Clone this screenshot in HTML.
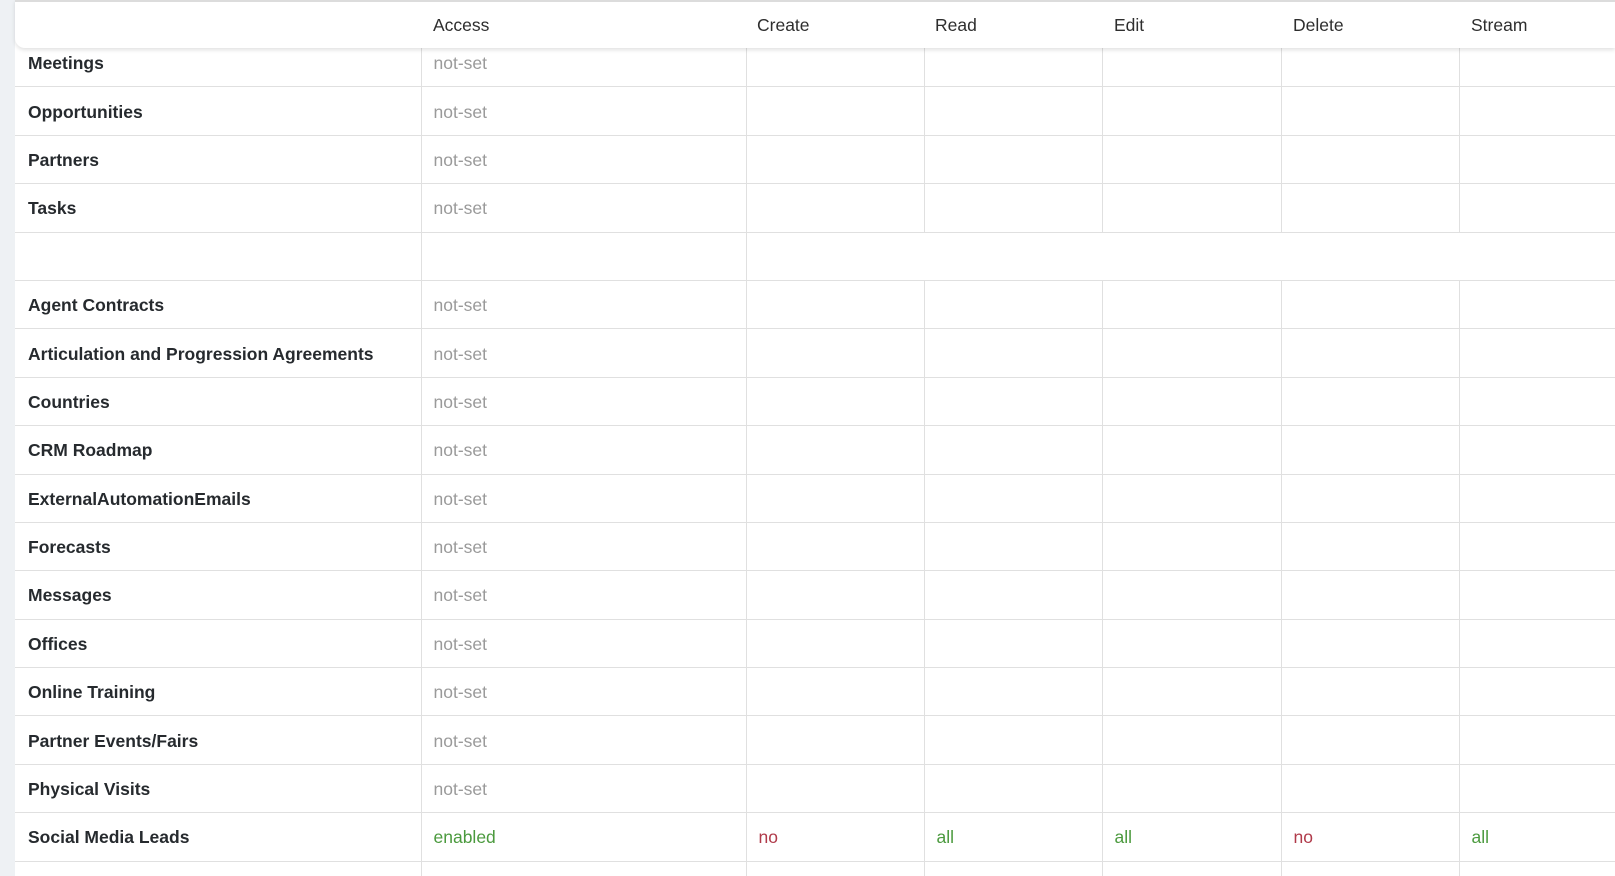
<!DOCTYPE html>
<html><head><meta charset="utf-8"><style>
html,body{margin:0;padding:0;width:1615px;height:876px;overflow:hidden;background:#fff;font-family:"Liberation Sans",sans-serif;}
.wrap{position:relative;width:1615px;height:876px;overflow:hidden;}
.strip{position:absolute;left:0;top:0;width:15px;height:876px;background:#eef1f4;}
table{position:absolute;left:15px;top:39px;border-collapse:collapse;table-layout:fixed;width:1600px;}
td{height:45.4px;border-bottom:1px solid #e0e0e0;border-left:1px solid #e0e0e0;padding:2px 0 0 12px;font-size:17.5px;color:#9a9a9a;white-space:nowrap;}
td:first-child{border-left:none;padding-left:13px;color:#262a2e;font-weight:bold;font-size:17.5px;}
.g{color:#4b9a3e}.r{color:#b03a4a}
.hdr{position:absolute;left:15px;top:0;width:1600px;height:46px;background:#fff;border-top:2px solid #dcdcdc;box-shadow:0 2px 4px rgba(0,0,0,0.12);border-radius:0 0 0 10px;z-index:2;font-size:17.5px;color:#2e2e2e;}
.hdr span{position:absolute;top:13px;}
</style></head><body><div class="wrap">
<div class="strip"></div>
<div class="hdr"><span style="left:418px">Access</span><span style="left:742px">Create</span><span style="left:920px">Read</span><span style="left:1099px">Edit</span><span style="left:1278px">Delete</span><span style="left:1456px">Stream</span></div>
<table>
<colgroup><col style="width:406px"><col style="width:325px"><col style="width:178px"><col style="width:178px"><col style="width:179px"><col style="width:178px"><col></colgroup>
<tr><td>Meetings</td><td>not-set</td><td></td><td></td><td></td><td></td><td></td></tr>
<tr><td>Opportunities</td><td>not-set</td><td></td><td></td><td></td><td></td><td></td></tr>
<tr><td>Partners</td><td>not-set</td><td></td><td></td><td></td><td></td><td></td></tr>
<tr><td>Tasks</td><td>not-set</td><td></td><td></td><td></td><td></td><td></td></tr>
<tr><td></td><td></td><td colspan="5"></td></tr>
<tr><td>Agent Contracts</td><td>not-set</td><td></td><td></td><td></td><td></td><td></td></tr>
<tr><td>Articulation and Progression Agreements</td><td>not-set</td><td></td><td></td><td></td><td></td><td></td></tr>
<tr><td>Countries</td><td>not-set</td><td></td><td></td><td></td><td></td><td></td></tr>
<tr><td>CRM Roadmap</td><td>not-set</td><td></td><td></td><td></td><td></td><td></td></tr>
<tr><td>ExternalAutomationEmails</td><td>not-set</td><td></td><td></td><td></td><td></td><td></td></tr>
<tr><td>Forecasts</td><td>not-set</td><td></td><td></td><td></td><td></td><td></td></tr>
<tr><td>Messages</td><td>not-set</td><td></td><td></td><td></td><td></td><td></td></tr>
<tr><td>Offices</td><td>not-set</td><td></td><td></td><td></td><td></td><td></td></tr>
<tr><td>Online Training</td><td>not-set</td><td></td><td></td><td></td><td></td><td></td></tr>
<tr><td>Partner Events/Fairs</td><td>not-set</td><td></td><td></td><td></td><td></td><td></td></tr>
<tr><td>Physical Visits</td><td>not-set</td><td></td><td></td><td></td><td></td><td></td></tr>
<tr><td>Social Media Leads</td><td class="g">enabled</td><td class="r">no</td><td class="g">all</td><td class="g">all</td><td class="r">no</td><td class="g">all</td></tr>
<tr><td></td><td></td><td></td><td></td><td></td><td></td><td></td></tr>
</table>
</div></body></html>
